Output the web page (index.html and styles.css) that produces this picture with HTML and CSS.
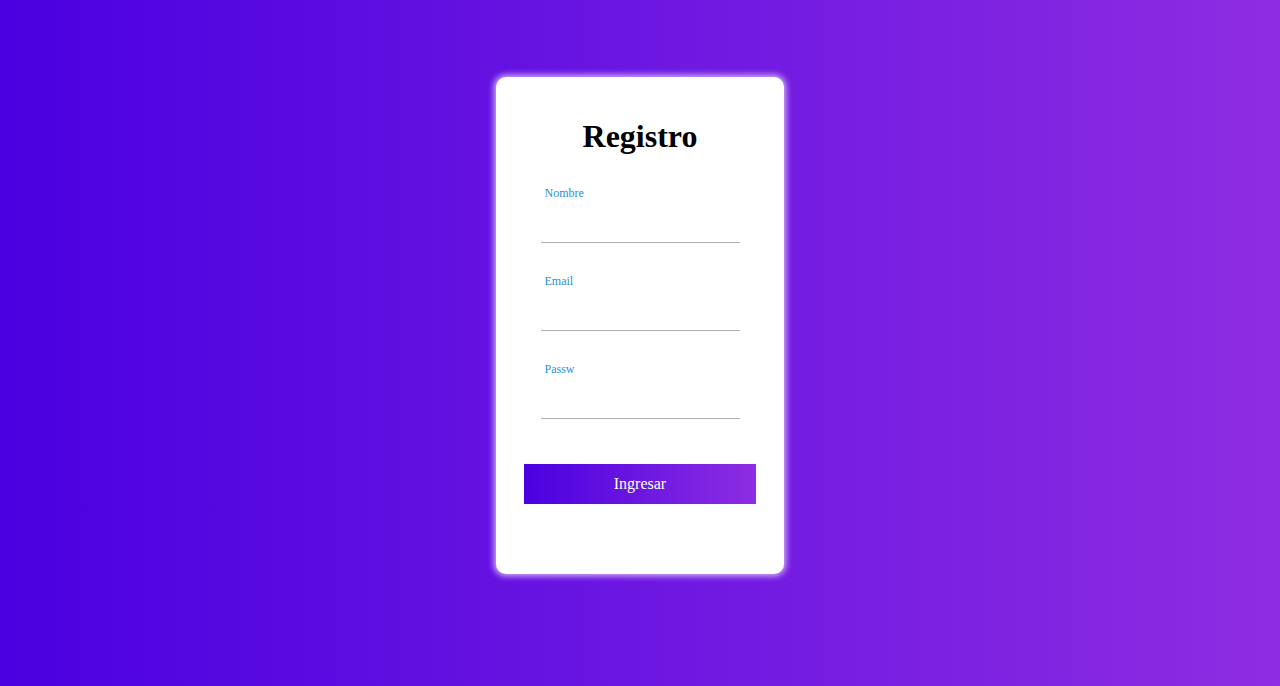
FILE: index.html
```html
<!DOCTYPE html>
<html lang="es">
<head>
<meta charset="utf-8">
<title>Registro</title>
<link rel="stylesheet" href="styles.css">
</head>
<body>
<div class="card">
  <h1 class="title">Registro</h1>
  <form class="form">
    <div class="field">
      <label class="label">Nombre</label>
      <input class="input" type="text">
    </div>
    <div class="field">
      <label class="label">Email</label>
      <input class="input" type="text">
    </div>
    <div class="field">
      <label class="label">Passw</label>
      <input class="input" type="password">
    </div>
    <button class="btn" type="button">Ingresar</button>
  </form>
</div>
</body>
</html>
```

FILE: styles.css
```css
html, body {
  margin: 0;
  padding: 0;
  height: 100%;
}
body {
  background: linear-gradient(to right, #4a00e0, #8e2de2);
  font-family: "Liberation Serif", "Times New Roman", serif;
  display: flex;
  justify-content: center;
  align-items: flex-start;
}
.card {
  margin-top: 77px;
  width: 288px;
  height: 497px;
  box-sizing: border-box;
  background: #fff;
  border-radius: 10px;
  box-shadow: 0 0 6px 2px rgba(225, 200, 255, 0.9);
  padding: 41px 28px 0;
}
.title {
  margin: 0;
  text-align: center;
  font-size: 32px;
  font-weight: bold;
  color: #000;
  line-height: 37px;
}
.form {
  display: flex;
  flex-direction: column;
  align-items: center;
  margin-top: 31px;
}
.field {
  width: 199px;
  margin-bottom: 31px;
  display: flex;
  flex-direction: column;
}
.label {
  padding-left: 4px;
  font-size: 12px;
  color: #2691d9;
  line-height: 14px;
}
.input {
  border: none;
  border-bottom: 1px solid #adadad;
  height: 42px;
  padding: 0;
  outline: none;
  background: transparent;
}
.btn {
  margin-top: 14px;
  width: 232px;
  height: 40px;
  border: none;
  background: linear-gradient(to right, #4a00e0, #8e2de2);
  color: #fff;
  font-family: "Liberation Serif", "Times New Roman", serif;
  font-size: 16px;
  cursor: pointer;
}
```
